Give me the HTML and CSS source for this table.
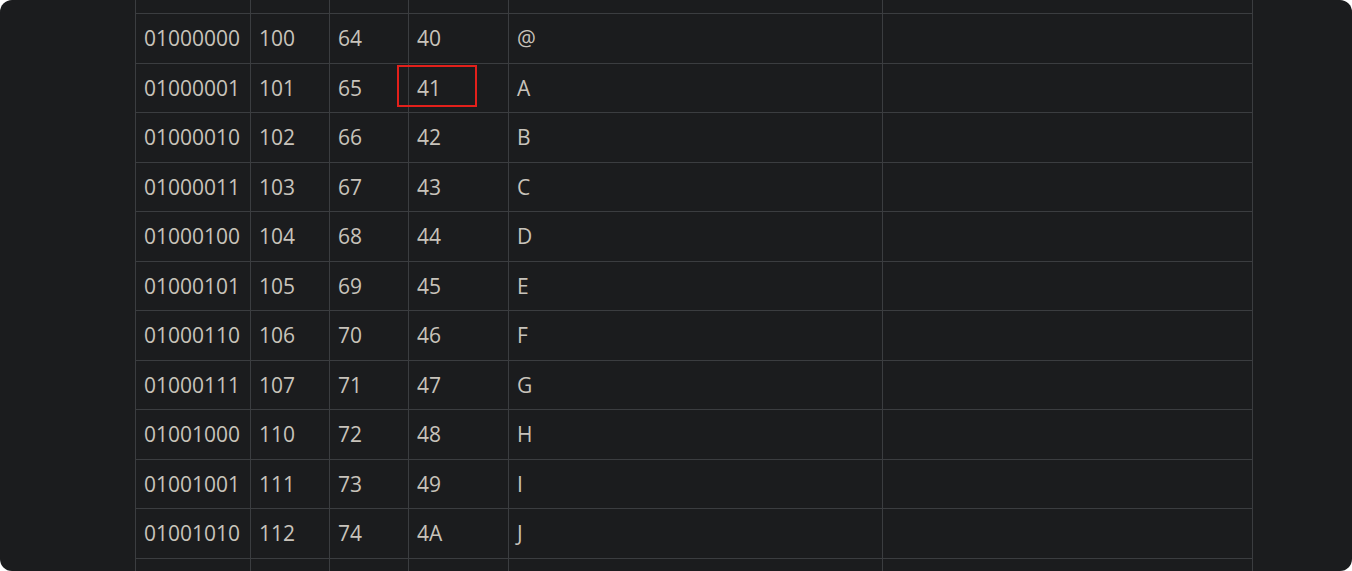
FILE: index.html
```html
<!DOCTYPE html>
<html lang="en">
<head>
<meta charset="utf-8">
<title>ASCII table</title>
<link rel="stylesheet" href="styles.css">
</head>
<body>
<div class="frame">
  <table class="ascii">
    <colgroup>
      <col class="c-bin"><col class="c-oct"><col class="c-dec"><col class="c-hex"><col class="c-chr"><col class="c-desc">
    </colgroup>
    <tbody>
      <tr class="cut"><td></td><td></td><td></td><td></td><td></td><td></td></tr>
      <tr><td>01000000</td><td>100</td><td>64</td><td>40</td><td>@</td><td></td></tr>
      <tr><td>01000001</td><td>101</td><td>65</td><td class="mark"><span class="hl"></span>41</td><td>A</td><td></td></tr>
      <tr><td>01000010</td><td>102</td><td>66</td><td>42</td><td>B</td><td></td></tr>
      <tr><td>01000011</td><td>103</td><td>67</td><td>43</td><td>C</td><td></td></tr>
      <tr><td>01000100</td><td>104</td><td>68</td><td>44</td><td>D</td><td></td></tr>
      <tr><td>01000101</td><td>105</td><td>69</td><td>45</td><td>E</td><td></td></tr>
      <tr><td>01000110</td><td>106</td><td>70</td><td>46</td><td>F</td><td></td></tr>
      <tr><td>01000111</td><td>107</td><td>71</td><td>47</td><td>G</td><td></td></tr>
      <tr><td>01001000</td><td>110</td><td>72</td><td>48</td><td>H</td><td></td></tr>
      <tr><td>01001001</td><td>111</td><td>73</td><td>49</td><td>I</td><td></td></tr>
      <tr><td>01001010</td><td>112</td><td>74</td><td>4A</td><td>J</td><td></td></tr>
      <tr><td></td><td></td><td></td><td></td><td></td><td></td></tr>
    </tbody>
  </table>
</div>
</body>
</html>
```

FILE: styles.css
```css
html, body {
  margin: 0;
  padding: 0;
  background: #ffffff;
}

.frame {
  height: 571px;
  background: #1b1c1e;
  border-radius: 12px;
  overflow: hidden;
  padding-left: 135px;
  box-sizing: border-box;
}

.ascii {
  border-collapse: collapse;
  table-layout: fixed;
  width: 1117px;
  font-family: "Open Sans", "Noto Sans", sans-serif;
  font-size: 21px;
  color: #c8c3bb;
}

.c-bin { width: 115px; }
.c-oct { width: 79px; }
.c-dec { width: 79px; }
.c-hex { width: 100px; }
.c-chr { width: 374px; }
.c-desc { width: 370px; }

.ascii td {
  border: 1px solid #3b3d40;
  padding: 0 0 0 8px;
  height: 48.5px;
  line-height: 48px;
  white-space: nowrap;
  vertical-align: middle;
}

.ascii tr.cut td {
  border-top: none;
  height: 13px;
  line-height: 13px;
}

.ascii td.mark {
  position: relative;
}

.hl {
  position: absolute;
  left: -12px;
  top: 1px;
  width: 80px;
  height: 42px;
  box-sizing: border-box;
  border: 2px solid #e3201b;
}
```
